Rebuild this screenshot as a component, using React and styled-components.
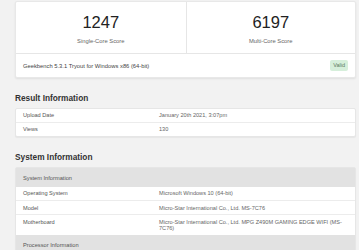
import React from "react";
import styled, { createGlobalStyle } from "styled-components";

const GlobalStyle = createGlobalStyle`
  html, body {
    margin: 0;
    padding: 0;
    background: #f2f2f2;
  }
  body {
    font-family: "Liberation Sans", Arial, sans-serif;
    color: #333;
  }
`;

const Page = styled.div`
  width: 359px;
  height: 250px;
  overflow: hidden;
  box-sizing: border-box;
  padding: 1px 3px 0 15px;
`;

const Card = styled.div`
  background: #fff;
  border: 1px solid #e8e8e8;
  border-radius: 2px;
  box-shadow: 0 1px 2px rgba(0, 0, 0, 0.08);
`;

const Scores = styled.div`
  display: grid;
  grid-template-columns: 1fr 1fr;
  border-bottom: 1px solid #e6e6e6;
`;

const Score = styled.div`
  height: 51px;
  display: flex;
  flex-direction: column;
  align-items: center;
  padding-top: 12px;
  box-sizing: border-box;
  & + & {
    border-left: 1px solid #e6e6e6;
  }
`;

const ScoreValue = styled.div`
  font-size: 16.5px;
  line-height: 16px;
  color: #222;
`;

const ScoreLabel = styled.div`
  font-size: 5.8px;
  line-height: 8px;
  margin-top: 7px;
  color: #666;
`;

const CardFooter = styled.div`
  height: 23px;
  display: flex;
  align-items: center;
  justify-content: space-between;
  padding: 0 7px;
  font-size: 5.8px;
  color: #444;
`;

const Badge = styled.span`
  background: #d6efdb;
  color: #5a7a60;
  border-radius: 2px;
  padding: 2px 3px;
  font-size: 5.5px;
  line-height: 7px;
`;

const SectionTitle = styled.h2`
  margin: 15px 0 5px;
  font-size: 8.3px;
  line-height: 10px;
  font-weight: bold;
  color: #333;
`;

const Table = styled.div`
  background: #fff;
  border: 1px solid #e6e6e6;
  border-radius: 2px;
  box-shadow: 0 1px 1px rgba(0, 0, 0, 0.05);
`;

const HeaderRow = styled.div`
  background: #e2e2e2;
  height: ${(p) => p.$h}px;
  display: flex;
  align-items: center;
  padding: 0 7px;
  font-size: 5.7px;
  color: #555;
`;

const Row = styled.div`
  display: grid;
  grid-template-columns: 136px 1fr;
  padding: 3.3px 6px 3px 7px;
  font-size: 5.6px;
  line-height: 6.8px;
  color: #555;
  & + & {
    border-top: 1px solid #ececec;
  }
`;

const Value = styled.div`
  color: #666;
`;

export default function App() {
  return (
    <Page>
      <GlobalStyle />
      <Card>
        <Scores>
          <Score>
            <ScoreValue>1247</ScoreValue>
            <ScoreLabel>Single-Core Score</ScoreLabel>
          </Score>
          <Score>
            <ScoreValue>6197</ScoreValue>
            <ScoreLabel>Multi-Core Score</ScoreLabel>
          </Score>
        </Scores>
        <CardFooter>
          <span>Geekbench 5.3.1 Tryout for Windows x86 (64-bit)</span>
          <Badge>Valid</Badge>
        </CardFooter>
      </Card>

      <SectionTitle>Result Information</SectionTitle>
      <Table>
        <Row>
          <span>Upload Date</span>
          <Value>January 20th 2021, 3:07pm</Value>
        </Row>
        <Row>
          <span>Views</span>
          <Value>130</Value>
        </Row>
      </Table>

      <SectionTitle>System Information</SectionTitle>
      <Table>
        <HeaderRow $h={19}>System Information</HeaderRow>
        <Row>
          <span>Operating System</span>
          <Value>Microsoft Windows 10 (64-bit)</Value>
        </Row>
        <Row>
          <span>Model</span>
          <Value>Micro-Star International Co., Ltd. MS-7C76</Value>
        </Row>
        <Row>
          <span>Motherboard</span>
          <Value>
            Micro-Star International Co., Ltd. MPG Z490M GAMING EDGE WIFI (MS-<wbr />7C76)
          </Value>
        </Row>
        <HeaderRow $h={19}>Processor Information</HeaderRow>
      </Table>
    </Page>
  );
}
